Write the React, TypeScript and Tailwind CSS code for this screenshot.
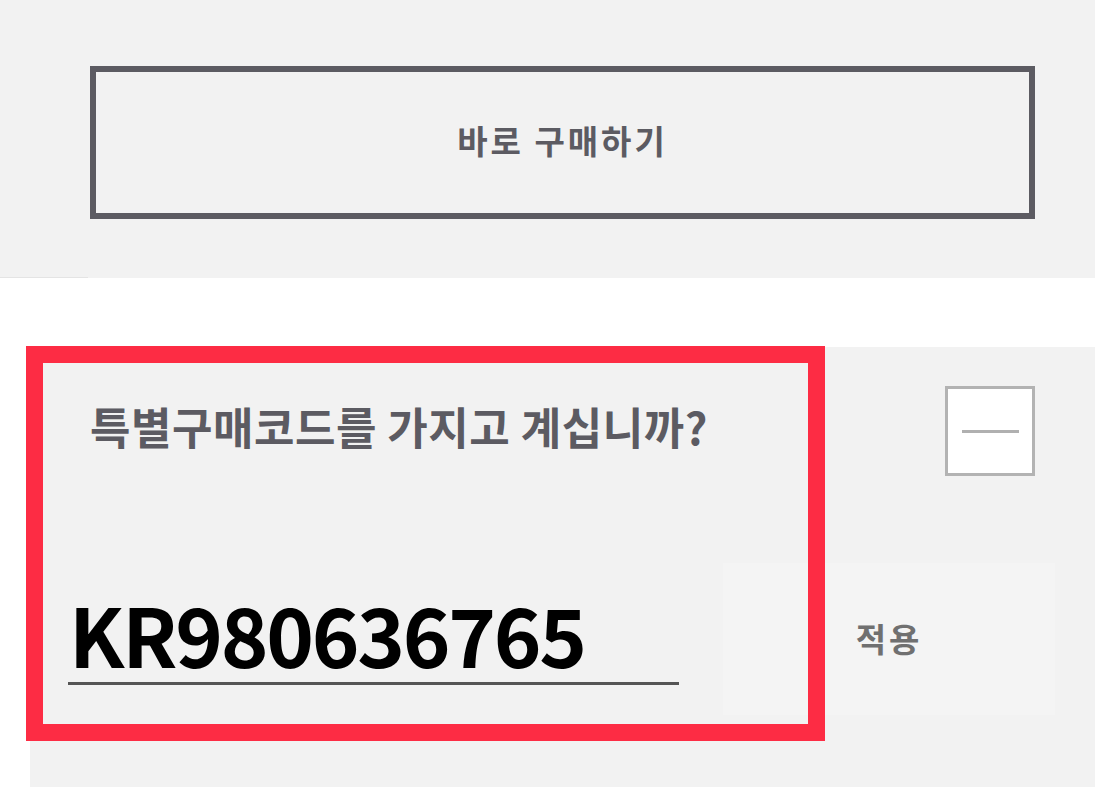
export default function App() {
  const font = { fontFamily: '"Noto Sans CJK KR", "Noto Sans", sans-serif' }

  return (
    <div className="w-[1116px] h-[795px] bg-white overflow-hidden" style={font}>
      {/* purchase section */}
      <div className="relative w-[1095px] h-[278px] bg-[#f2f2f2] pt-[66px] pl-[90px]">
        <button className="w-[945px] h-[153px] border-[6px] border-[#5c5b62] bg-[#f2f2f2] flex items-center justify-center pb-[4px] text-[33px] font-bold text-[#5c5b62] tracking-[3px]">
          바로 구매하기
        </button>
        <div className="absolute left-0 bottom-0 w-[88px] h-px bg-[#e4e4e4]" />
      </div>

      {/* special code section */}
      <div className="relative mt-[69px] ml-[30px] w-[1065px] h-[440px] bg-[#f2f2f2]">
        <div className="flex items-start justify-between pt-[39px] pr-[60px]">
          <h2 className="pl-[60px] pt-[18px] text-[44px] font-bold leading-none text-[#5c5b62] tracking-[0.5px]">
            특별구매코드를 가지고 계십니까?
          </h2>
          <button className="w-[90px] h-[90px] border-[3px] border-[#b3b3b3] bg-white flex items-center justify-center">
            <span className="block w-[57px] h-[3px] bg-[#b0b0b0]" />
          </button>
        </div>

        <div className="flex items-start mt-[87px] ml-[38px]">
          <div className="w-[611px] h-[122px] border-b-[3px] border-[#555] flex items-end pb-[9px] pl-[1px]">
            <span className="text-[81px] font-bold leading-none text-black tracking-[-2.3px]">KR980636765</span>
          </div>
          <button className="ml-[44px] w-[332px] h-[152px] bg-[#f4f4f4] flex items-center justify-center text-[33px] font-bold text-[#707070] tracking-[3px]">
            적용
          </button>
        </div>

        {/* highlight overlay */}
        <div className="absolute left-[-4px] top-[-1px] w-[799px] h-[395px] border-[17px] border-[#fd2c44] pointer-events-none" />
      </div>
    </div>
  )
}
